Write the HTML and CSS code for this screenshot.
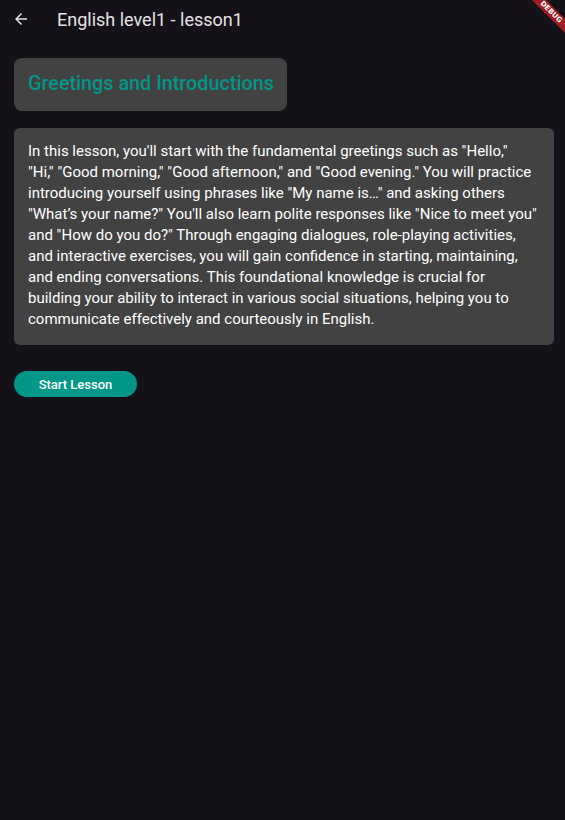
FILE: index.html
```html
<!DOCTYPE html>
<html>
<head>
<meta charset="utf-8">
<link rel="stylesheet" href="styles.css">
</head>
<body>
<div class="app">
  <header class="appbar">
    <svg class="back" width="18" height="18" viewBox="0 0 24 24"><path d="M20 11H7.83l5.59-5.59L12 4l-8 8 8 8 1.41-1.41L7.83 13H20v-2z" fill="#e6e1e5"/></svg>
    <h1 class="title">English level1 - lesson1</h1>
  </header>
  <main class="content">
    <div class="heading-card"><h2 class="heading">Greetings and Introductions</h2></div>
    <div class="desc-card">
      <p class="desc">In this lesson, you'll start with the fundamental greetings such as "Hello,"<br>"Hi," "Good morning," "Good afternoon," and "Good evening." You will practice introducing yourself using phrases like "My name is…" and asking others "What’s your name?" You'll also learn polite responses like "Nice to meet you" and "How do you do?" Through engaging dialogues, role-playing activities, and interactive exercises, you will gain confidence in starting, maintaining, and ending conversations. This foundational knowledge is crucial for building your ability to interact in various social situations, helping you to communicate effectively and courteously in English.</p>
    </div>
    <button class="start">Start Lesson</button>
  </main>
  <div class="debug"><span>DEBUG</span></div>
</div>
</body>
</html>
```
FILE: styles.css
```css
html, body {
  margin: 0;
  padding: 0;
  background: #141218;
  font-family: Roboto, "Noto Sans", sans-serif;
}
.app {
  position: relative;
  width: 565px;
  height: 820px;
  overflow: hidden;
  background: #141218;
}
.appbar {
  height: 38px;
  display: flex;
  align-items: center;
  padding-left: 12px;
}
.back {
  display: block;
}
.title {
  margin: 0 0 0 27px;
  font-size: 18px;
  font-weight: 400;
  color: #e6e1e5;
}
.content {
  padding: 20px 11px 0 14px;
  display: flex;
  flex-direction: column;
  align-items: flex-start;
}
.heading-card {
  background: #424242;
  border-radius: 8px;
  padding: 13px 13px 14px 14px;
}
.heading {
  margin: 0;
  font-size: 19.8px;
  font-weight: 500;
  color: #009688;
  line-height: 26px;
}
.desc-card {
  margin-top: 17px;
  background: #424242;
  border-radius: 6px;
  padding: 13px 14px 15px 14px;
  align-self: stretch;
}
.desc {
  margin: 0;
  font-size: 15px;
  font-weight: 400;
  color: #ffffff;
  line-height: 21px;
}
.start {
  margin-top: 26px;
  height: 26px;
  width: 123px;
  border: none;
  border-radius: 13px;
  background: #009688;
  color: #ffffff;
  font-family: Roboto, sans-serif;
  font-size: 13px;
  font-weight: 500;
  padding: 0;
}
.debug {
  position: absolute;
  top: 0;
  right: 0;
  width: 40px;
  height: 40px;
  overflow: hidden;
}
.debug span {
  position: absolute;
  top: 7px;
  right: -18px;
  width: 64px;
  height: 10px;
  background: #a01c22;
  color: #fff;
  font-size: 7px;
  font-weight: 900;
  line-height: 10px;
  text-align: center;
  transform: rotate(45deg);
  font-family: "DejaVu Sans", sans-serif;
}
```
